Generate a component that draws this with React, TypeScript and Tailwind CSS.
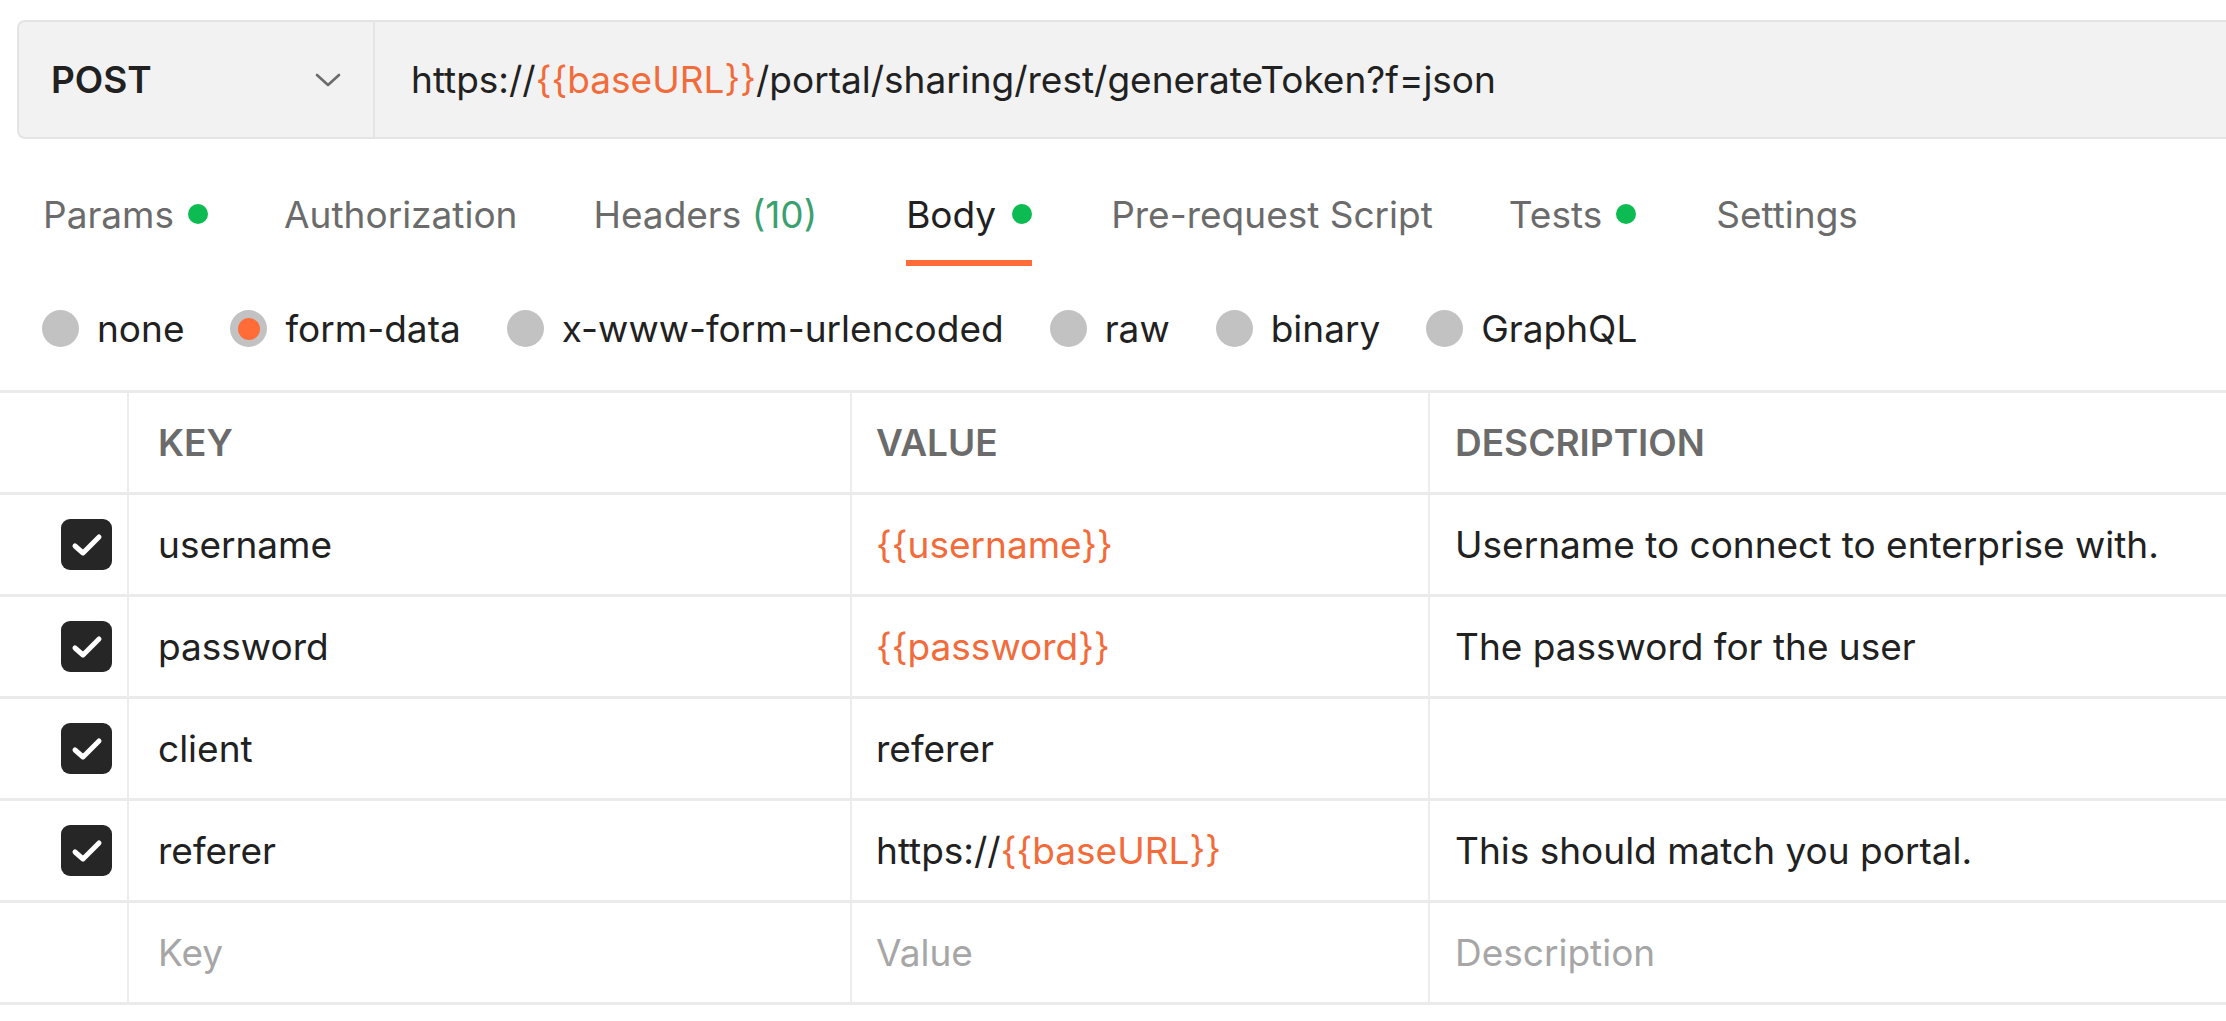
import React from "react";

const ORANGE = "text-[#f26b3a]";

function Chevron() {
  return (
    <svg width="26" height="14" viewBox="0 0 26 14" fill="none">
      <path d="M2 2 L13 12 L24 2" stroke="#6b6b6b" strokeWidth="2.6" strokeLinecap="round" strokeLinejoin="round" />
    </svg>
  );
}

function Dot() {
  return <span className="inline-block w-[20px] h-[20px] rounded-full bg-[#0cbb52]" />;
}

function Check() {
  return (
    <div className="w-[51px] h-[51px] rounded-[9px] bg-[#262626] flex items-center justify-center">
      <svg width="32" height="26" viewBox="0 0 32 26" fill="none">
        <path d="M4 14 L12 21 L28 5" stroke="white" strokeWidth="5" strokeLinecap="round" strokeLinejoin="round" />
      </svg>
    </div>
  );
}

function Radio({ label, active }: { label: string; active?: boolean }) {
  return (
    <div className="flex items-center gap-[18px]">
      <span className="w-[37px] h-[37px] rounded-full bg-[#c2c2c2] flex items-center justify-center">
        {active && <span className="w-[22px] h-[22px] rounded-full bg-[#ff6c37]" />}
      </span>
      <span className="text-[#212121]">{label}</span>
    </div>
  );
}

type Cell = React.ReactNode;

function Row({ check, k, v, d }: { check?: boolean; k: Cell; v: Cell; d: Cell }) {
  return (
    <div className="flex h-[102px] border-b-[3px] border-[#ebebeb]">
      <div className="w-[129px] shrink-0 flex items-center justify-end pr-[15px] border-r-2 border-[#ececec]">
        {check && <Check />}
      </div>
      <div className="w-[723px] shrink-0 flex items-center pl-[29px] border-r-2 border-[#ececec]">{k}</div>
      <div className="w-[578px] shrink-0 flex items-center pl-[24px] border-r-2 border-[#ececec]">{v}</div>
      <div className="flex-1 flex items-center pl-[25px]">{d}</div>
    </div>
  );
}

export default function App() {
  return (
    <div
      className="w-[2226px] h-[1021px] bg-white overflow-hidden text-[37px] text-[#212121]"
      style={{ fontFamily: "Inter, 'Noto Sans', sans-serif" }}
    >
      {/* request line */}
      <div className="pt-[20px] pl-[17px]">
        <div className="flex h-[119px] bg-[#f2f2f2] border-2 border-r-0 border-[#e4e4e4] rounded-l-[8px]">
          <div className="w-[356px] shrink-0 flex items-center justify-between pl-[32px] pr-[32px] border-r-2 border-[#e4e4e4]">
            <span className="font-semibold text-[#212121]">POST</span>
            <Chevron />
          </div>
          <div className="flex items-center pl-[36px] text-[#212121]">
            <span>https://</span>
            <span className={ORANGE}>{"{{baseURL}}"}</span>
            <span>/portal/sharing/rest/generateToken?f=json</span>
          </div>
        </div>
      </div>

      {/* request tabs */}
      <div className="flex items-end gap-[76px] pl-[43px] h-[127px] text-[#6b6b6b]">
        <div className="flex items-center gap-[14px] pb-[24px]">
          <span>Params</span>
          <Dot />
        </div>
        <div className="pb-[24px]">Authorization</div>
        <div className="pb-[24px]">
          Headers <span className="text-[#3aa070]">(10)</span>
        </div>
        <div className="ml-[13px] flex items-center gap-[16px] pb-[18px] border-b-[6px] border-[#ff6c37] text-[#212121]">
          <span>Body</span>
          <Dot />
        </div>
        <div className="ml-[3px] pb-[24px]">Pre-request Script</div>
        <div className="flex items-center gap-[14px] pb-[24px]">
          <span>Tests</span>
          <Dot />
        </div>
        <div className="ml-[4px] pb-[24px]">Settings</div>
      </div>

      {/* body type */}
      <div className="flex items-center gap-[46px] pl-[42px] h-[123px] mt-[1px]">
        <Radio label="none" />
        <Radio label="form-data" active />
        <Radio label="x-www-form-urlencoded" />
        <Radio label="raw" />
        <Radio label="binary" />
        <Radio label="GraphQL" />
      </div>

      {/* form-data table */}
      <div className="border-t-[3px] border-[#ebebeb]">
        <Row
          k={<span className="font-semibold text-[#6b6b6b]">KEY</span>}
          v={<span className="font-semibold text-[#6b6b6b]">VALUE</span>}
          d={<span className="font-semibold text-[#6b6b6b]">DESCRIPTION</span>}
        />
        <Row
          check
          k="username"
          v={<span className={ORANGE}>{"{{username}}"}</span>}
          d="Username to connect to enterprise with."
        />
        <Row
          check
          k="password"
          v={<span className={ORANGE}>{"{{password}}"}</span>}
          d="The password for the user"
        />
        <Row check k="client" v="referer" d="" />
        <Row
          check
          k="referer"
          v={
            <span>
              https://<span className={ORANGE}>{"{{baseURL}}"}</span>
            </span>
          }
          d="This should match you portal."
        />
        <Row
          k={<span className="text-[#a6a6a6]">Key</span>}
          v={<span className="text-[#a6a6a6]">Value</span>}
          d={<span className="text-[#a6a6a6]">Description</span>}
        />
      </div>
    </div>
  );
}
